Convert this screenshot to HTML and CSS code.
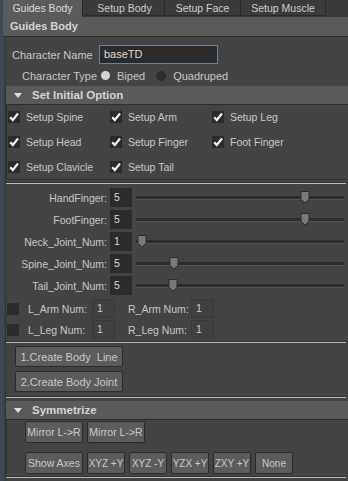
FILE: index.html
```html
<!DOCTYPE html>
<html lang="en">
<head>
  <meta charset="UTF-8">
  <title>Guides Body</title>
  <link rel="stylesheet" href="styles.css">
</head>
<body>
  <div class="window">
    <div class="edge"></div>
    <div class="main">

      <!-- Tabs -->
      <div class="tabs">
        <div class="tab tab-wide active">Guides Body</div>
        <div class="tab tab-wide">Setup Body</div>
        <div class="tab tab-face">Setup Face</div>
        <div class="tab tab-muscle">Setup Muscle</div>
      </div>

      <div class="frame-head">Guides Body</div>
      <div class="frame-body">

        <div class="name-row">
          <span class="name-label">Character Name</span>
          <div class="text-field">baseTD</div>
        </div>

        <div class="type-row">
          <span>Character Type</span>
          <span class="radio on"></span>
          <span class="radio-label">Biped</span>
          <span class="radio off"></span>
          <span class="radio-label">Quadruped</span>
        </div>

        <!-- Set Initial Option -->
        <div class="section-head"><span class="tri"></span>Set Initial Option</div>
        <div class="opt-grid">
          <div class="opt"><span class="check"><svg width="12" height="12" viewBox="0 0 12 12"><path d="M2.2 6.2 L4.8 9 L10 2.5" /></svg></span>Setup Spine</div>
          <div class="opt"><span class="check"><svg width="12" height="12" viewBox="0 0 12 12"><path d="M2.2 6.2 L4.8 9 L10 2.5" /></svg></span>Setup Arm</div>
          <div class="opt"><span class="check"><svg width="12" height="12" viewBox="0 0 12 12"><path d="M2.2 6.2 L4.8 9 L10 2.5" /></svg></span>Setup Leg</div>
          <div class="opt"><span class="check"><svg width="12" height="12" viewBox="0 0 12 12"><path d="M2.2 6.2 L4.8 9 L10 2.5" /></svg></span>Setup Head</div>
          <div class="opt"><span class="check"><svg width="12" height="12" viewBox="0 0 12 12"><path d="M2.2 6.2 L4.8 9 L10 2.5" /></svg></span>Setup Finger</div>
          <div class="opt"><span class="check"><svg width="12" height="12" viewBox="0 0 12 12"><path d="M2.2 6.2 L4.8 9 L10 2.5" /></svg></span>Foot Finger</div>
          <div class="opt"><span class="check"><svg width="12" height="12" viewBox="0 0 12 12"><path d="M2.2 6.2 L4.8 9 L10 2.5" /></svg></span>Setup Clavicle</div>
          <div class="opt"><span class="check"><svg width="12" height="12" viewBox="0 0 12 12"><path d="M2.2 6.2 L4.8 9 L10 2.5" /></svg></span>Setup Tail</div>
        </div>
        <div class="sep sep-top"></div>

        <!-- Sliders -->
        <div class="sliders">
          <div class="slider-row">
            <span class="slider-label">HandFinger:</span>
            <div class="num-field">5</div>
            <div class="track"><svg class="thumb" style="left: 164px" width="10" height="14" viewBox="0 0 10 14"><path d="M1 1.5 H9 V9.5 L5 13 L1 9.5 Z" /></svg></div>
          </div>
          <div class="slider-row">
            <span class="slider-label">FootFinger:</span>
            <div class="num-field">5</div>
            <div class="track"><svg class="thumb" style="left: 164px" width="10" height="14" viewBox="0 0 10 14"><path d="M1 1.5 H9 V9.5 L5 13 L1 9.5 Z" /></svg></div>
          </div>
          <div class="slider-row">
            <span class="slider-label">Neck_Joint_Num:</span>
            <div class="num-field">1</div>
            <div class="track"><svg class="thumb" style="left: 1px" width="10" height="14" viewBox="0 0 10 14"><path d="M1 1.5 H9 V9.5 L5 13 L1 9.5 Z" /></svg></div>
          </div>
          <div class="slider-row">
            <span class="slider-label">Spine_Joint_Num:</span>
            <div class="num-field">5</div>
            <div class="track"><svg class="thumb" style="left: 33px" width="10" height="14" viewBox="0 0 10 14"><path d="M1 1.5 H9 V9.5 L5 13 L1 9.5 Z" /></svg></div>
          </div>
          <div class="slider-row">
            <span class="slider-label">Tail_Joint_Num:</span>
            <div class="num-field">5</div>
            <div class="track"><svg class="thumb" style="left: 32px" width="10" height="14" viewBox="0 0 10 14"><path d="M1 1.5 H9 V9.5 L5 13 L1 9.5 Z" /></svg></div>
          </div>
        </div>

        <!-- Limb counts -->
        <div class="limbs">
          <div class="limb-row">
            <span class="box"></span>
            <span class="limb-label">L_Arm Num:</span>
            <div class="small-field">1</div>
            <span class="limb-label right">R_Arm Num:</span>
            <div class="small-field">1</div>
          </div>
          <div class="limb-row">
            <span class="box"></span>
            <span class="limb-label">L_Leg Num:</span>
            <div class="small-field">1</div>
            <span class="limb-label right">R_Leg Num:</span>
            <div class="small-field">1</div>
          </div>
        </div>
        <div class="sep sep-mid"></div>

        <div class="create">
          <button class="btn create-btn">1.Create Body&nbsp; Line</button>
          <button class="btn create-btn">2.Create Body Joint</button>
        </div>
        <div class="sep sep-low"></div>

        <!-- Symmetrize -->
        <div class="section-head sym-head"><span class="tri"></span>Symmetrize</div>
        <div class="sym-body">
          <div class="btn-row">
            <button class="btn b58">Mirror L-&gt;R</button>
            <button class="btn b58">Mirror L-&gt;R</button>
          </div>
          <div class="btn-row axes">
            <button class="btn b58">Show Axes</button>
            <button class="btn b38">XYZ +Y</button>
            <button class="btn b38">XYZ -Y</button>
            <button class="btn b38">YZX +Y</button>
            <button class="btn b38">ZXY +Y</button>
            <button class="btn b38">None</button>
          </div>
        </div>
        <div class="sep sep-end"></div>

      </div>
    </div>
  </div>
</body>
</html>
```

FILE: styles.css
```css
body {
  margin: 0;
  padding: 0;
  background-color: #444444;
  color: #c8c8c8;
  font-family: "Liberation Sans", Arial, sans-serif;
  font-size: 10.5px;
}
.window {
  display: flex;
  width: 348px;
  height: 481px;
  overflow: hidden;
}
.edge {
  width: 3px;
  background-color: #3d4a57;
}
.main {
  flex: 1;
}

/* tabs */
.tabs {
  display: flex;
  height: 17px;
  background-color: #3a3a3a;
}
.tab {
  height: 16px;
  line-height: 16px;
  text-align: center;
  font-size: 10.5px;
  color: #cfcfcf;
  background-color: #3b3b3b;
  border-right: 1px solid #2a2a2a;
  border-bottom: 1px solid #2a2a2a;
  box-sizing: border-box;
  white-space: nowrap;
}
.tab.active {
  background-color: #5b5b5b;
  color: #dcdcdc;
  height: 17px;
  border-bottom: none;
  margin-right: 2px;
}
.tab-wide { width: 80px; }
.tab-face { width: 76px; }
.tab-muscle { width: 85px; }

.frame-head {
  height: 19px;
  line-height: 19px;
  padding-left: 7px;
  background-color: #5a5a5a;
  font-weight: bold;
  font-size: 11px;
  color: #d4d4d4;
  border-bottom: 1px solid #2b2b2b;
}
.frame-body {
  margin-left: 2px;
  border-left: 1px solid #333333;
  height: 444px;
}

.name-row {
  display: flex;
  align-items: center;
  padding-top: 8px;
  padding-left: 6px;
  height: 19px;
  font-size: 11px;
}
.name-label {
  width: 87px;
}
.text-field {
  width: 113px;
  height: 17px;
  line-height: 17px;
  padding-left: 4px;
  background-color: #2b2b2b;
  border: 1px solid #68849e;
  color: #dcdcdc;
}

.type-row {
  display: flex;
  align-items: center;
  height: 15px;
  margin-top: 4px;
  padding-left: 16px;
  font-size: 11px;
  white-space: nowrap;
}
.radio {
  width: 9px;
  height: 9px;
  border-radius: 50%;
  margin-left: 4px;
}
.radio.on { background-color: #d4d4d4; }
.radio.off {
  background-color: #2b2b2b;
  width: 10px;
  height: 10px;
  margin-left: 11px;
}
.radio-label { margin-left: 7px; }

.section-head {
  display: flex;
  align-items: center;
  height: 18px;
  margin-top: 3px;
  background-color: #5a5a5a;
  font-weight: bold;
  font-size: 11.5px;
  color: #d4d4d4;
}
.tri {
  width: 0;
  height: 0;
  border-left: 4px solid transparent;
  border-right: 4px solid transparent;
  border-top: 5px solid #e0e0e0;
  margin-left: 8px;
  margin-right: 10px;
}

.opt-grid {
  display: grid;
  grid-template-columns: 102px 102px 102px;
  row-gap: 11px;
  padding: 5px 0 5px 1px;
  border: 1px solid #2f2f2f;
  border-right: none;
}
.opt {
  display: flex;
  align-items: center;
  height: 14px;
  gap: 6px;
  white-space: nowrap;
}
.check {
  width: 12px;
  height: 12px;
  background-color: #2b2b2b;
}
.check svg {
  display: block;
}
.check path {
  fill: none;
  stroke: #f0f0f0;
  stroke-width: 2.2;
}

.sep {
  height: 1px;
  background-color: #b8b8b8;
  border-top: 1px solid #353535;
  margin-right: 2px;
}
.sep-top { margin-top: 2px; }
.sep-mid { margin-top: 2px; }
.sep-low { margin-top: 4px; }
.sep-end { margin-top: 2px; }

.sliders {
  display: flex;
  flex-direction: column;
  gap: 3px;
  margin-top: 4px;
}
.slider-row {
  display: flex;
  align-items: center;
  height: 19px;
}
.slider-label {
  flex-shrink: 0;
  width: 101px;
  text-align: right;
  margin-right: 3px;
  white-space: nowrap;
}
.num-field {
  flex-shrink: 0;
  width: 18px;
  height: 19px;
  line-height: 19px;
  padding-left: 4px;
  background-color: #2b2b2b;
  color: #dcdcdc;
}
.track {
  position: relative;
  flex: 1;
  height: 3px;
  margin-left: 4px;
  margin-right: 4px;
  background-color: #2d2d2d;
  border-bottom: 1px solid #555555;
}
.thumb {
  position: absolute;
  top: -6px;
}
.thumb path {
  fill: #7a7a7a;
  stroke: #2a2a2a;
  stroke-width: 1;
}

.limbs {
  display: flex;
  flex-direction: column;
  gap: 2px;
  margin-top: 4px;
}
.limb-row {
  display: flex;
  align-items: center;
  height: 19px;
  white-space: nowrap;
}
.box {
  flex-shrink: 0;
  width: 12px;
  height: 12px;
  margin-left: 1px;
  margin-right: 9px;
  background-color: #2b2b2b;
}
.limb-label {
  flex-shrink: 0;
  width: 64px;
}
.limb-label.right {
  width: 63px;
  margin-left: 13px;
}
.small-field {
  flex-shrink: 0;
  width: 17px;
  height: 17px;
  line-height: 17px;
  padding-left: 4px;
  background-color: #414141;
  border: 1px solid #3a3a3a;
  color: #d0d0d0;
}

.btn {
  font-family: "Liberation Sans", Arial, sans-serif;
  font-size: 10.5px;
  color: #cacaca;
  background-color: #5c5c5c;
  border: 1px solid #2b2b2b;
  border-radius: 2px;
  padding: 0;
  box-sizing: border-box;
  white-space: nowrap;
  overflow: visible;
}
.create {
  display: flex;
  flex-direction: column;
  gap: 4px;
  margin-top: 3px;
  padding-left: 9px;
}
.create-btn {
  width: 108px;
  height: 21px;
  font-size: 11px;
}

.sym-head {
  margin-top: 3px;
  border-bottom: 1px solid #2b2b2b;
}
.sym-body {
  padding-left: 18px;
  border-left: 1px solid #333333;
}
.btn-row {
  display: flex;
  gap: 4px;
  padding-top: 1px;
}
.btn-row.axes {
  padding-top: 9px;
}
.btn-row .btn {
  height: 22px;
  flex-shrink: 0;
}
.b58 { width: 58px; }
.b38 { width: 38px; font-size: 10px; }
```
